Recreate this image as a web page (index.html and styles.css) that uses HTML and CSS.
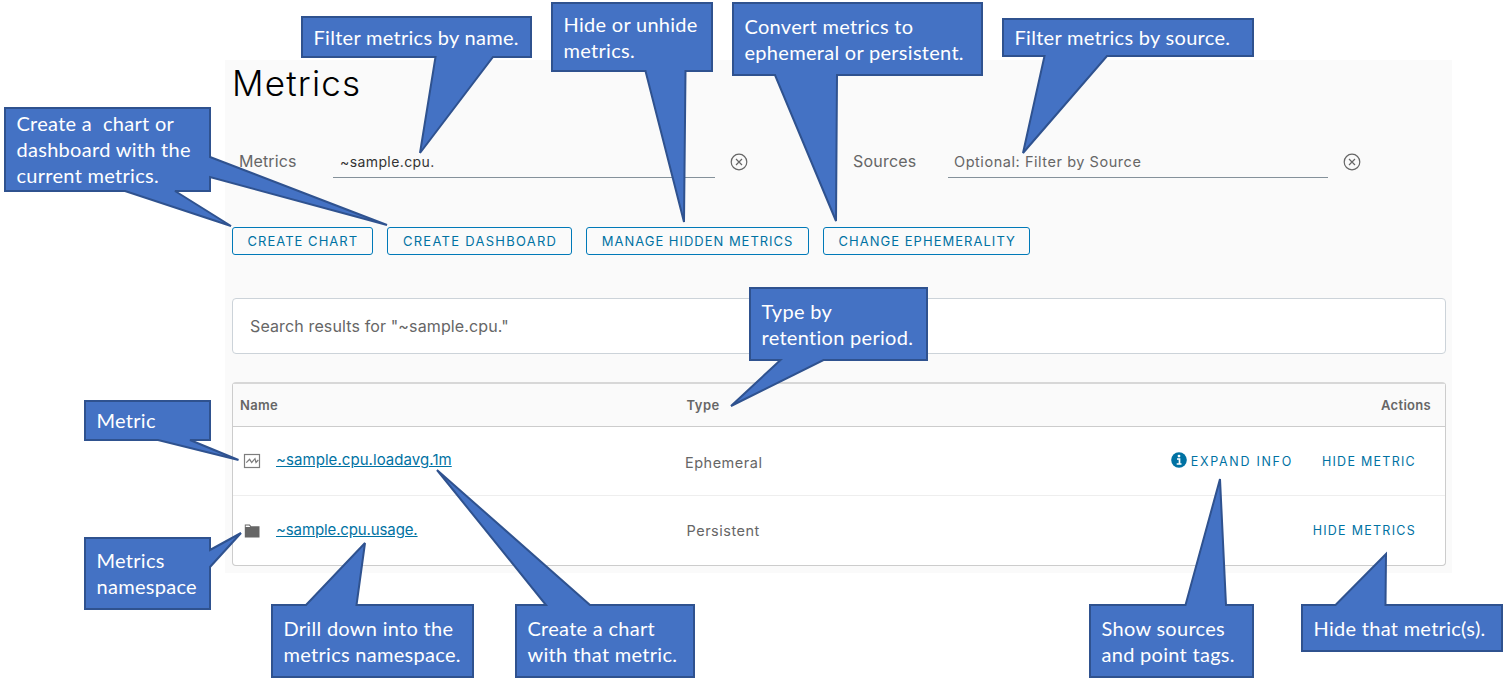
FILE: index.html
```html
<!DOCTYPE html>
<html lang="en">
<head>
<meta charset="utf-8">
<title>Metrics</title>
<link rel="stylesheet" href="styles.css">
</head>
<body>
<main class="panel">
  <h1 class="title">Metrics</h1>
  <div class="filters">
    <div class="filter">
      <label class="filter-label metrics-label">Metrics</label>
      <div class="field field-value">~sample.cpu.</div>
      <svg class="clear" viewBox="0 0 18 18"><circle cx="9" cy="9" r="7.8"/><path d="M6 6l6 6M12 6l-6 6"/></svg>
    </div>
    <div class="filter">
      <label class="filter-label sources-label">Sources</label>
      <div class="field field-hint">Optional: Filter by Source</div>
      <svg class="clear" viewBox="0 0 18 18"><circle cx="9" cy="9" r="7.8"/><path d="M6 6l6 6M12 6l-6 6"/></svg>
    </div>
  </div>
  <div class="buttons">
    <button class="btn btn-chart"><span>CREATE CHART</span></button>
    <button class="btn btn-dash"><span>CREATE DASHBOARD</span></button>
    <button class="btn btn-hidden"><span>MANAGE HIDDEN METRICS</span></button>
    <button class="btn btn-eph"><span>CHANGE EPHEMERALITY</span></button>
  </div>
  <div class="results"><span>Search results for "~sample.cpu."</span></div>
  <div class="table">
    <div class="row head">
      <div class="name">Name</div>
      <div class="type">Type</div>
      <div class="actions">Actions</div>
    </div>
    <div class="row">
      <div class="name">
        <svg class="icon" viewBox="0 0 18 16"><rect x="1.500" y="1.500" width="15" height="13" fill="#fff" stroke="#7d7d7d" stroke-width="1.200"/><path d="M3.300 9.700L6.600 6.300 8.700 9.500 12 5.700 13 9.500 15.300 7" fill="none" stroke="#7d7d7d" stroke-width="1.200"/></svg>
        <a class="link link-metric">~sample.cpu.loadavg.1m</a>
      </div>
      <div class="type ephemeral">Ephemeral</div>
      <div class="actions">
        <a class="action expand"><svg class="info" viewBox="0 0 16 16"><circle cx="8" cy="8" r="7.800" fill="#0072a3"/><circle cx="8" cy="4.100" r="1.400" fill="#fff"/><path d="M6 7h2.500v4.700M5.700 12h4.800" fill="none" stroke="#fff" stroke-width="1.700"/></svg><span>EXPAND INFO</span></a>
        <a class="action"><span>HIDE METRIC</span></a>
      </div>
    </div>
    <div class="row last">
      <div class="name">
        <svg class="icon" viewBox="0 0 18 16"><path d="M1.800 1.500h4.900l1.600 1.800H16.500V14.500H1.800z" fill="#666"/><path d="M2.700 2.600h3.500l1.100 1.500H2.700z" fill="#fff"/></svg>
        <a class="link link-space">~sample.cpu.usage.</a>
      </div>
      <div class="type persistent">Persistent</div>
      <div class="actions">
        <a class="action"><span>HIDE METRICS</span></a>
      </div>
    </div>
  </div>
</main>

<svg class="shapes" viewBox="0 0 1505 681">
  <path d="M5 108H210V157L387 225L210 177V191H175L231 226L125 191H5z"/>
  <path d="M302 17H531V57H493L420 153L435.500 57H302z"/>
  <path d="M552 3H712V71H685.500L684 222L645.500 71H552z"/>
  <path d="M733 3H982V75H837L836 221L775 75H733z"/>
  <path d="M1003 19H1253V56H1107L1023 153L1044.500 56H1003z"/>
  <path d="M750 288H927V360H823.500L731 406L780.500 360H750z"/>
  <path d="M85 401H210V440H190L238.500 460L158 440H85z"/>
  <path d="M85 538H210V550L241 533L210 567V609H85z"/>
  <path d="M272 605H306L365 543L356.500 605H473V677H272z"/>
  <path d="M516 605H546L437 470L590 605H694V677H516z"/>
  <path d="M1090 605H1185.500L1220 479L1226 605H1253V677H1090z"/>
  <path d="M1302 605H1335.500L1386 554L1385.500 605H1502V651H1302z"/>
</svg>
<div class="note n-create"><p>Create a&nbsp; chart or<br>dashboard with the<br>current metrics.</p></div>
<div class="note n-name"><p>Filter metrics by name.</p></div>
<div class="note n-hide"><p>Hide or unhide<br>metrics.</p></div>
<div class="note n-convert"><p>Convert metrics to<br>ephemeral or persistent.</p></div>
<div class="note n-source"><p>Filter metrics by source.</p></div>
<div class="note n-type"><p>Type by<br>retention period.</p></div>
<div class="note n-metric"><p>Metric</p></div>
<div class="note n-space"><p>Metrics<br>namespace</p></div>
<div class="note n-drill"><p>Drill down into the<br>metrics namespace.</p></div>
<div class="note n-chart"><p>Create a chart<br>with that metric.</p></div>
<div class="note n-show"><p>Show sources<br>and point tags.</p></div>
<div class="note n-row"><p>Hide that metric(s).</p></div>
</body>
</html>
```
FILE: styles.css
```css
* { box-sizing: border-box; }
body { margin: 0; width: 1505px; height: 681px; overflow: hidden; position: relative; background: #fff; font-family: Inter, "Liberation Sans", sans-serif; color: #666; }
.panel { margin: 60px 0 0 225px; width: 1227px; height: 513px; background: #fafafa; padding: 0 6px 0 7px; display: flex; flex-direction: column; overflow: hidden; }
body::before { content: ""; display: table; }
.title { margin: 0; height: 48px; line-height: 47px; font-size: 35px; font-weight: 300; color: #000; letter-spacing: 1.2px; }
.filters { display: flex; margin-top: 38px; height: 32px; }
.filter { display: flex; flex: none; width: 614px; padding-left: 7px; }
.filter + .filter { width: 600px; }
.filter-label { flex: none; width: 94px; font-size: 16px; line-height: 30px; white-space: nowrap; letter-spacing: 0.1px; }
.sources-label { width: 95px; letter-spacing: 0.200px; }
.field { flex: none; width: 382px; height: 32px; border-bottom: 1px solid #84919a; padding-left: 7px; font-size: 14px; line-height: 32px; letter-spacing: 0.4px; white-space: nowrap; }
.field-value { color: #333; }
.field-hint { width: 380px; padding-left: 6px; font-size: 14.500px; letter-spacing: 0.550px; }
.clear { flex: none; width: 18px; height: 18px; margin: 7px 0 0 14.500px; fill: none; stroke: #666; stroke-width: 1.200; }
.buttons { display: flex; margin-top: 49px; gap: 14px; }
.btn { height: 28px; border: 1px solid #0079b8; border-radius: 3px; background: #fafafa; color: #0072a3; font: 400 13px/26px Inter, sans-serif; letter-spacing: 1.030px; padding: 0 0 0 14.500px; text-align: left; white-space: nowrap; }
.btn-chart { width: 141.400px; }
.btn-dash { width: 184.900px; letter-spacing: 1.270px; }
.btn-hidden { width: 222.700px; letter-spacing: 0.980px; }
.btn-eph { width: 207px; }
.results { margin-top: 43px; height: 56px; border: 1px solid #ccd3d9; border-radius: 4px; background: #fff; padding-left: 17px; font-size: 16px; line-height: 54px; letter-spacing: 0.130px; }
.table { margin-top: 28px; height: 184px; border: 1px solid #ccc; border-top: 2px solid #d7d7d7; border-radius: 4px; background: #fff; }
.row { display: flex; height: 69px; align-items: center; border-bottom: 1px solid #eee; font-size: 14px; }
.row.head { height: 43px; background: #fafafa; border-bottom-color: #ccc; font-size: 13px; font-weight: 600; letter-spacing: 0.300px; }
.row.last { border-bottom: 0; }
.name { width: 452px; padding-left: 7px; display: flex; align-items: center; }
.type { flex: 1; padding-left: 1.500px; letter-spacing: 0.500px; }
.row:not(.head) .type { font-size: 14.500px; }
.ephemeral { padding: 2px 0 0; }
.icon { width: 18px; height: 16px; margin-left: 3px; flex: none; }
.link { margin-left: 15px; padding-bottom: 3px; font-size: 15px; letter-spacing: 0.060px; color: #0072a3; text-decoration: underline; white-space: nowrap; }
.link-space { letter-spacing: -0.120px; }
.actions { display: flex; gap: 29px; padding-right: 29px; }
.head .actions { padding-right: 14px; }
.action { display: flex; align-items: center; gap: 3px; font-size: 12.500px; color: #0072a3; letter-spacing: 1.270px; white-space: nowrap; }
.expand { letter-spacing: 1.700px; }
.info { width: 16px; height: 16px; margin-bottom: 2px; margin-right: 0.500px; }
.shapes { position: absolute; left: 0; top: 0; width: 1505px; height: 681px; fill: #4472c4; stroke: #2f528f; stroke-width: 2; stroke-miterlimit: 3; }
.note { position: absolute; display: flex; align-items: center; padding-left: 12.500px; color: #fff; font-family: Lato, sans-serif; font-size: 20px; letter-spacing: 0.290px; line-height: 26px; white-space: nowrap; }
.note p { margin: 0 0 2px; }
.n-create { left: 4px; top: 107px; width: 207px; height: 85px; }
.n-name { left: 301px; top: 16px; width: 231px; height: 43px; }
.n-hide { left: 551px; top: 2px; width: 162px; height: 71px; }
.n-convert { left: 732px; top: 2px; width: 251px; height: 76px; }
.n-source { left: 1002px; top: 18px; width: 252px; height: 39px; }
.n-type { left: 749px; top: 287px; width: 179px; height: 75px; }
.n-metric { left: 84px; top: 400px; width: 127px; height: 42px; }
.n-space { left: 84px; top: 537px; width: 127px; height: 74px; }
.n-drill { left: 271px; top: 604px; width: 203px; height: 75px; }
.n-chart { left: 515px; top: 604px; width: 180px; height: 75px; }
.n-show { left: 1089px; top: 604px; width: 165px; height: 75px; }
.n-row { left: 1301px; top: 604px; width: 202px; height: 49px; }
```
